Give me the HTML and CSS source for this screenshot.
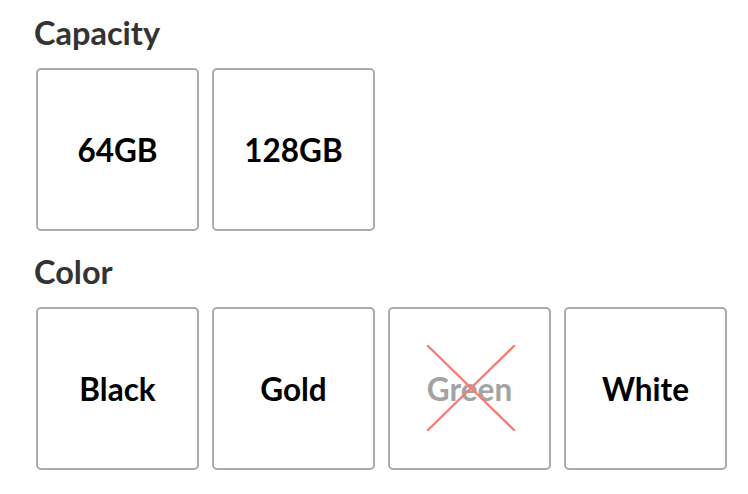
FILE: index.html
```html
<!DOCTYPE html>
<html>
<head>
<meta charset="utf-8">
<link rel="stylesheet" href="styles.css">
</head>
<body>
<div class="page">
  <section class="group">
    <h2 class="title">Capacity</h2>
    <div class="options">
      <div class="option">64GB</div>
      <div class="option">128GB</div>
    </div>
  </section>
  <section class="group">
    <h2 class="title">Color</h2>
    <div class="options">
      <div class="option">Black</div>
      <div class="option">Gold</div>
      <div class="option disabled">Green
        <svg class="cross" viewBox="0 0 88 86" width="88" height="86"><path d="M1 1 L87 85 M87 1 L1 85" stroke="#fa7b74" stroke-width="2.4" stroke-linecap="round" fill="none"/></svg>
      </div>
      <div class="option">White</div>
    </div>
  </section>
</div>
</body>
</html>
```

FILE: styles.css
```css
html, body {
  margin: 0;
  padding: 0;
  background: #fff;
}
.page {
  padding: 13px 0 0 34px;
  font-family: Lato, "Noto Sans", sans-serif;
}
.group {
  margin-bottom: 21px;
}
.title {
  margin: 0;
  font-size: 32.5px;
  font-weight: 700;
  color: #333;
  line-height: 40px;
}
.options {
  display: flex;
  gap: 13px;
  margin-top: 15px;
  padding-left: 2px;
}
.option {
  position: relative;
  box-sizing: border-box;
  width: 163px;
  height: 163px;
  border: 2px solid #ababab;
  border-radius: 5px;
  display: flex;
  align-items: center;
  justify-content: center;
  font-size: 31.5px;
  font-weight: 700;
  color: #000;
}
.option.disabled {
  color: #a3a3a3;
}
.cross {
  position: absolute;
  left: 37px;
  top: 36px;
}
```
